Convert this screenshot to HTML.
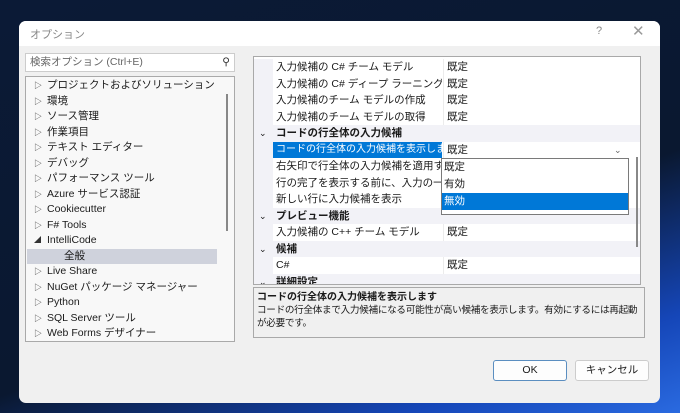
<!DOCTYPE html>
<html><head><meta charset="utf-8"><style>
*{box-sizing:border-box;margin:0;padding:0}
body{width:680px;height:413px;overflow:hidden;position:relative;font-family:"Liberation Sans","Noto Sans CJK JP",sans-serif;font-size:10.5px;color:#1a1a1a;background:linear-gradient(160deg,#0b1a36 0%,#0a1830 60%,#1546b8 85%,#2a6ae0 100%)}
.a{position:absolute}
.dlg{left:19px;top:21px;width:641px;height:382px;background:#f0f0f0;border-radius:7px;overflow:hidden}
.tb{left:0;top:0;width:641px;height:25px;background:#fff}
.tree{left:6px;top:55px;width:210px;height:266px;background:#f8f8f8;border:1px solid #a9a9a9}
.ti{position:absolute;left:0;height:15px;line-height:15px;white-space:nowrap}
.ti .t{position:absolute;left:8px;top:0;font-size:8px;color:#333}
.ti .x{position:absolute;left:21px}
.grid{left:234px;top:35px;width:388px;height:229px;background:#fff;border:1px solid #a9a9a9;overflow:hidden}
.r{position:absolute;left:0;width:386px;height:16.5px;line-height:16.5px;white-space:nowrap}
.r .m{position:absolute;left:0;top:0;width:19px;height:100%;background:#f2f2f7}
.r .n{position:absolute;left:22px;width:166px;overflow:hidden}
.r .v{position:absolute;left:189px;border-left:1px solid #ececec;padding-left:3px;height:100%}
.cat{background:#f2f2f7;font-weight:bold}
.cat .n{left:22px;width:300px}
.cat .c{position:absolute;left:5px;font-size:9px;font-weight:normal}
</style></head><body>
<div class="a dlg">
 <div class="a tb"></div>
 <div class="a" style="left:11px;top:5px;color:#888;font-size:11px">オプション</div>
 <div class="a" style="left:577px;top:4px;color:#888;font-size:11px">?</div>
 <div class="a" style="left:613px;top:1px;color:#999;font-size:15px;font-weight:300">✕</div>
 <div class="a" style="left:6px;top:32px;width:210px;height:19px;background:#fff;border:1px solid #ccc;color:#666;line-height:17px;padding-left:4px">検索オプション (Ctrl+E)<span style="position:absolute;right:4px;top:0;color:#333">⚲</span></div>
 <div class="a tree">
  <div class="a" style="left:200px;top:17px;width:2px;height:137px;background:#888"></div>
  <div class="ti" style="top:1px"><span class="t">▷</span><span class="x">プロジェクトおよびソリューション</span></div>
  <div class="ti" style="top:16.5px"><span class="t">▷</span><span class="x">環境</span></div>
  <div class="ti" style="top:32px"><span class="t">▷</span><span class="x">ソース管理</span></div>
  <div class="ti" style="top:47.5px"><span class="t">▷</span><span class="x">作業項目</span></div>
  <div class="ti" style="top:63px"><span class="t">▷</span><span class="x">テキスト エディター</span></div>
  <div class="ti" style="top:78.5px"><span class="t">▷</span><span class="x">デバッグ</span></div>
  <div class="ti" style="top:94px"><span class="t">▷</span><span class="x">パフォーマンス ツール</span></div>
  <div class="ti" style="top:109.5px"><span class="t">▷</span><span class="x">Azure サービス認証</span></div>
  <div class="ti" style="top:125px"><span class="t">▷</span><span class="x">Cookiecutter</span></div>
  <div class="ti" style="top:140.5px"><span class="t">▷</span><span class="x">F# Tools</span></div>
  <div class="ti" style="top:156px"><span class="t" style="font-size:7px">◢</span><span class="x">IntelliCode</span></div>
  <div class="ti" style="top:171.5px;left:1px;width:190px;background:#cfd2dc"><span class="x" style="left:37px">全般</span></div>
  <div class="ti" style="top:187px"><span class="t">▷</span><span class="x">Live Share</span></div>
  <div class="ti" style="top:202.5px"><span class="t">▷</span><span class="x">NuGet パッケージ マネージャー</span></div>
  <div class="ti" style="top:218px"><span class="t">▷</span><span class="x">Python</span></div>
  <div class="ti" style="top:233.5px"><span class="t">▷</span><span class="x">SQL Server ツール</span></div>
  <div class="ti" style="top:249px"><span class="t">▷</span><span class="x">Web Forms デザイナー</span></div>
 </div>
 <div class="a grid">
  <div class="r" style="top:2px"><span class="m"></span><span class="n">入力候補の C# チーム モデル</span><span class="v">既定</span></div>
  <div class="r" style="top:18.5px"><span class="m"></span><span class="n">入力候補の C# ディープ ラーニング基本モデル</span><span class="v">既定</span></div>
  <div class="r" style="top:35px"><span class="m"></span><span class="n">入力候補のチーム モデルの作成</span><span class="v">既定</span></div>
  <div class="r" style="top:51.5px"><span class="m"></span><span class="n">入力候補のチーム モデルの取得</span><span class="v">既定</span></div>
  <div class="r cat" style="top:68px"><span class="c">⌄</span><span class="n">コードの行全体の入力候補</span></div>
  <div class="r" style="top:84.5px"><span class="m"></span><span class="n" style="left:19px;width:169px;background:#0078d7;color:#fff;padding-left:3px;font-size:10px">コードの行全体の入力候補を表示します</span><span class="v">既定</span><span style="position:absolute;left:360px;color:#666;font-size:9px">⌄</span></div>
  <div class="r" style="top:101px"><span class="m"></span><span class="n">右矢印で行全体の入力候補を適用する</span></div>
  <div class="r" style="top:117.5px"><span class="m"></span><span class="n">行の完了を表示する前に、入力の一時停止</span></div>
  <div class="r" style="top:134px"><span class="m"></span><span class="n">新しい行に入力候補を表示</span></div>
  <div class="r cat" style="top:150.5px"><span class="c">⌄</span><span class="n">プレビュー機能</span></div>
  <div class="r" style="top:167px"><span class="m"></span><span class="n">入力候補の C++ チーム モデル</span><span class="v">既定</span></div>
  <div class="r cat" style="top:183.5px"><span class="c">⌄</span><span class="n">候補</span></div>
  <div class="r" style="top:200px"><span class="m"></span><span class="n">C#</span><span class="v">既定</span></div>
  <div class="r cat" style="top:216.5px"><span class="c">⌄</span><span class="n">詳細設定</span></div>
  <div class="a" style="left:382px;top:100px;width:2px;height:90px;background:#888"></div>
  <div class="a" style="left:187px;top:101px;width:188px;height:57px;background:#fff;border:1px solid #7a7a7a">
   <div style="height:17px;line-height:17px;padding-left:2px">既定</div>
   <div style="height:17px;line-height:17px;padding-left:2px">有効</div>
   <div style="height:17px;line-height:17px;padding-left:2px;background:#0078d7;color:#fff">無効</div>
  </div>
 </div>
 <div class="a" style="left:234px;top:266px;width:392px;height:51px;border:1px solid #a9a9a9;padding:3px 3px;line-height:13px;font-size:10px;overflow:hidden">
  <div style="font-weight:bold">コードの行全体の入力候補を表示します</div>
  <div style="white-space:nowrap;font-size:9.6px;letter-spacing:-0.3px">コードの行全体まで入力候補になる可能性が高い候補を表示します。有効にするには再起動<br>が必要です。</div>
 </div>
 <div class="a" style="left:474px;top:339px;width:74px;height:21px;background:#fdfdfd;border:1px solid #5b8ec0;border-radius:3px;text-align:center;line-height:19px">OK</div>
 <div class="a" style="left:556px;top:339px;width:74px;height:21px;background:#fdfdfd;border:1px solid #ccc;border-radius:3px;text-align:center;line-height:19px">キャンセル</div>
</div>
</body></html>
